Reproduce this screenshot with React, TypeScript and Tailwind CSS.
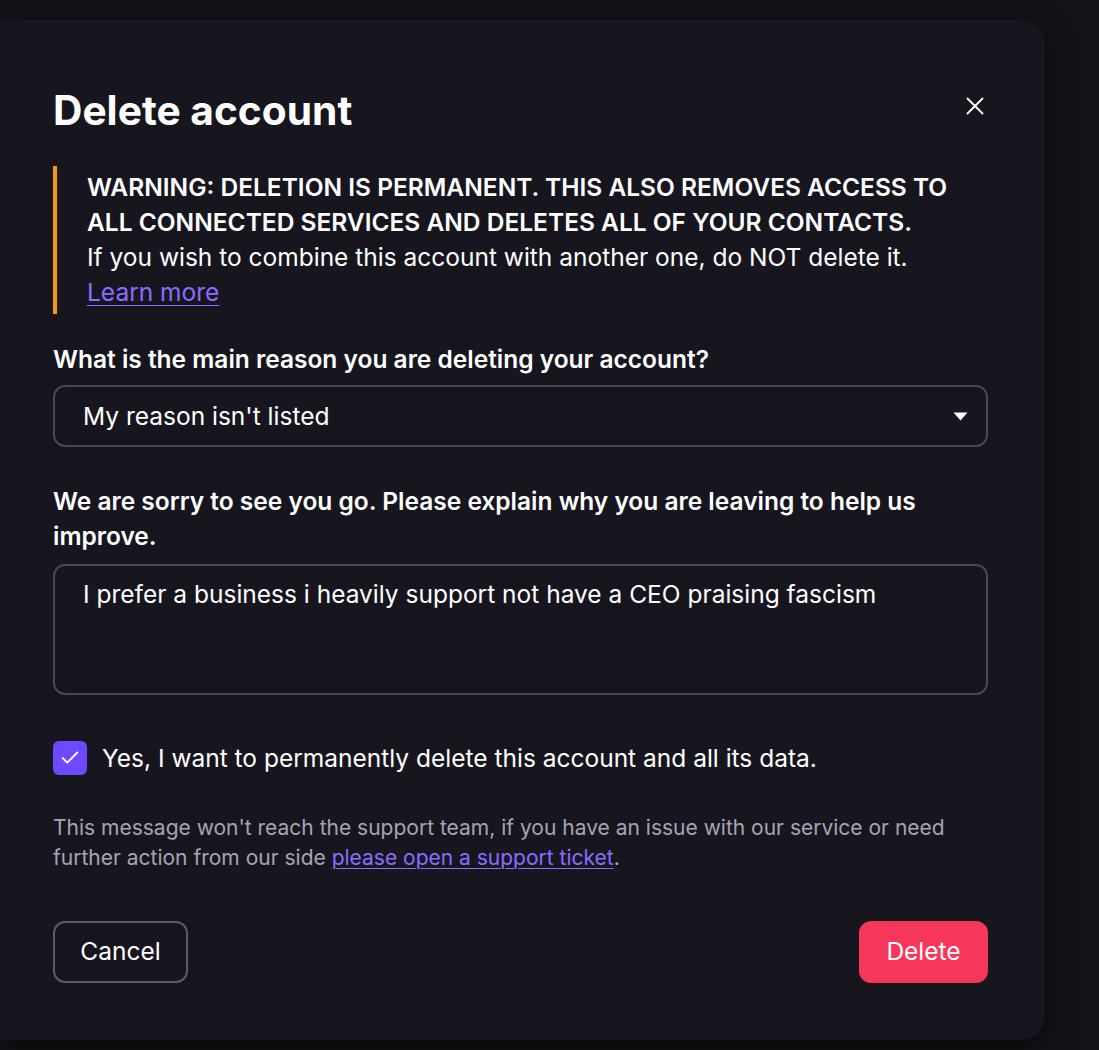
import React, { useState } from 'react';
import { X, Check } from 'lucide-react';

export default function App() {
  const [checked, setChecked] = useState(true);

  return (
    <div
      className="min-h-[1050px] w-[1099px] overflow-hidden bg-[#141318] pt-[20px]"
      style={{ fontFamily: 'Inter, "Noto Sans", sans-serif' }}
    >
      <div className="w-[1045px] h-[1020px] rounded-br-[24px] rounded-tr-[24px] bg-[#17161f] pl-[53px] pr-[57px] pt-[66px] shadow-[0_10px_30px_rgba(0,0,0,0.6)]">
        {/* Header */}
        <div className="flex items-start justify-between">
          <h1 className="text-[40.7px] leading-[50px] font-bold text-white">Delete account</h1>
          <button className="mt-[5px] mr-[-2px] text-white">
            <X className="w-[30px] h-[30px]" strokeWidth={1.5} />
          </button>
        </div>

        {/* Warning */}
        <div className="mt-[30px] border-l-[4px] border-[#f39c12] pl-[30px] py-[4px] text-[24.5px] leading-[35px] text-white">
          <p className="font-semibold uppercase pr-[20px]">
            Warning: Deletion is permanent. This also removes access to all connected services and deletes all of your contacts.
          </p>
          <p>If you wish to combine this account with another one, do NOT delete it.</p>
          <a href="#" className="text-[#8b6cff] underline underline-offset-[4px] decoration-1">Learn more</a>
        </div>

        {/* Reason */}
        <label className="mt-[28px] block text-[24.5px] leading-[35px] font-semibold text-white">
          What is the main reason you are deleting your account?
        </label>
        <div className="mt-[8px] h-[62px] rounded-[12px] border-[2px] border-[#4a4755] flex items-center justify-between pl-[28px] pr-[16px]">
          <span className="text-[24.5px] text-white">My reason isn't listed</span>
          <svg width="15" height="9" viewBox="0 0 15 9" className="mr-[2px]">
            <path d="M0.5 0.5h14L7.5 8.5z" fill="#fff" />
          </svg>
        </div>

        {/* Explain */}
        <label className="mt-[37px] block text-[24.5px] leading-[35px] font-semibold text-white pr-[40px]">
          We are sorry to see you go. Please explain why you are leaving to help us improve.
        </label>
        <div className="mt-[10px] h-[131px] rounded-[12px] border-[2px] border-[#4a4755] px-[28px] pt-[11px]">
          <p className="text-[24.5px] leading-[35px] text-white">
            I prefer a business i heavily support not have a CEO praising fascism
          </p>
        </div>

        {/* Confirm */}
        <div className="mt-[45px] flex items-center gap-[15px]">
          <button
            onClick={() => setChecked(!checked)}
            className="w-[34px] h-[34px] rounded-[6px] bg-[#6d4aff] flex items-center justify-center"
          >
            {checked && <Check className="w-[22px] h-[22px] text-white" strokeWidth={2} />}
          </button>
          <span className="text-[24.5px] text-white">Yes, I want to permanently delete this account and all its data.</span>
        </div>

        <p className="mt-[36px] text-[21px] leading-[30px] text-[#a7a4b4]">
          This message won't reach the support team, if you have an issue with our service or need further action from our side{' '}
          <a href="#" className="text-[#8b6cff] underline underline-offset-[3px] decoration-1">please open a support ticket</a>.
        </p>

        {/* Footer */}
        <div className="mt-[48px] flex items-center justify-between">
          <button className="h-[62px] w-[135px] rounded-[12px] border-[2px] border-[#5d5a67] text-[24.5px] text-white">
            Cancel
          </button>
          <button className="h-[62px] w-[129px] rounded-[12px] bg-[#f7365c] text-[24.5px] text-white">
            Delete
          </button>
        </div>
      </div>
    </div>
  );
}
